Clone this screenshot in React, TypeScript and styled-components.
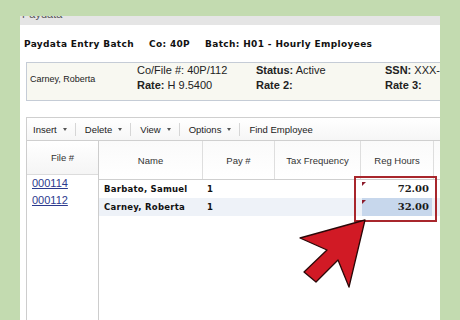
import React from 'react';
import styled, { createGlobalStyle } from 'styled-components';

const GlobalStyle = createGlobalStyle`
  html, body {
    margin: 0;
    padding: 0;
    background: #c3dbb0;
  }
  body {
    font-family: "Liberation Sans", Arial, sans-serif;
  }
`;

const Page = styled.div`
  width: 460px;
  height: 320px;
  box-sizing: border-box;
  padding: 16px 0 0 20px;
  overflow: hidden;
  background: #c3dbb0;
`;

const Panel = styled.div`
  position: relative;
  width: 420px;
  height: 304px;
  background: #fff;
  overflow: hidden;
  display: flex;
  flex-direction: column;
`;

const TitleBar = styled.div`
  height: 9px;
  flex: none;
  background: #e5e5e5;
  overflow: hidden;
  padding-left: 2px;
  span {
    display: block;
    margin-top: -7px;
    font-size: 11px;
    line-height: 11px;
    color: #555;
  }
`;

const BatchHeader = styled.div`
  flex: none;
  display: flex;
  gap: 15px;
  height: 26px;
  margin-top: 6px;
  padding-left: 4px;
  line-height: 26px;
  font-family: "DejaVu Sans", Verdana, sans-serif;
  font-weight: bold;
  font-size: 9px;
  letter-spacing: 0.35px;
  color: #111;
  white-space: nowrap;
`;

const InfoBox = styled.div`
  flex: none;
  display: flex;
  width: 440px;
  height: 39px;
  box-sizing: border-box;
  margin: 5px 0 0 6px;
  background: #f8f8f1;
  border: 1px solid #c5ccd6;
  white-space: nowrap;
`;

const InfoName = styled.div`
  width: 108px;
  padding: 0 0 5px 3px;
  align-self: center;
  font-size: 9px;
  color: #222;
`;

const InfoCol = styled.div<{ $w: number }>`
  width: ${p => p.$w}px;
  flex: none;
  font-size: 11px;
  line-height: 15px;
  color: #222;
  b {
    font-weight: bold;
  }
`;

const Toolbar = styled.div`
  flex: none;
  display: flex;
  align-items: center;
  width: 440px;
  height: 24px;
  box-sizing: border-box;
  margin: 16px 0 0 6px;
  border: 1px solid #cfcfcf;
  border-right: none;
  background: linear-gradient(#fff, #f6f6f6);
  font-size: 9.5px;
  color: #222;
`;

const ToolItem = styled.div`
  display: flex;
  align-items: center;
  padding: 0 8px 0 9px;
  white-space: nowrap;
  &:first-child {
    padding-left: 6px;
  }
`;

const Caret = styled.span`
  width: 0;
  height: 0;
  margin-left: 6px;
  border-left: 2.5px solid transparent;
  border-right: 2.5px solid transparent;
  border-top: 3px solid #555;
`;

const ToolSep = styled.span`
  width: 1px;
  height: 13px;
  background: #d6d6d6;
`;

const GridArea = styled.div`
  flex: 1;
  display: flex;
  margin-left: 6px;
`;

const FileCol = styled.div`
  width: 71px;
  flex: none;
  border-left: 1px solid #cdcdcd;
  border-right: 1px solid #cdcdcd;
`;

const FileHead = styled.div`
  height: 33px;
  border-bottom: 1px solid #dcdcdc;
  background: linear-gradient(#fff, #f5f5f5);
  display: flex;
  align-items: center;
  justify-content: center;
  font-size: 9.5px;
  color: #333;
`;

const FileLink = styled.a`
  display: block;
  padding-left: 5px;
  font-size: 11px;
  line-height: 17px;
  color: #2c3a8e;
  text-decoration: underline;
`;

const MainGrid = styled.div`
  flex: 1;
  display: flex;
  flex-direction: column;
`;

const HeadRow = styled.div`
  display: flex;
  height: 38px;
  border-bottom: 1px solid #cfcfcf;
  background: linear-gradient(#fafafa, #fff);
`;

const HeadCell = styled.div<{ $w?: number }>`
  width: ${p => (p.$w ? `${p.$w}px` : 'auto')};
  flex: ${p => (p.$w ? 'none' : '1')};
  box-sizing: border-box;
  display: flex;
  align-items: center;
  justify-content: center;
  font-size: 9.5px;
  color: #333;
  & + & {
    border-left: 1px solid #dedede;
  }
`;

const Row = styled.div<{ $alt?: boolean }>`
  display: flex;
  height: 18px;
  background: ${p => (p.$alt ? '#eef2f8' : '#fff')};
`;

const Cell = styled.div<{ $w: number }>`
  width: ${p => p.$w}px;
  flex: none;
  box-sizing: border-box;
  padding-left: 5px;
  line-height: 18px;
  font-family: "DejaVu Sans", Verdana, sans-serif;
  font-weight: bold;
  font-size: 8.5px;
  letter-spacing: 0.25px;
  color: #111;
  white-space: nowrap;
`;

const HoursCell = styled.div<{ $selected?: boolean }>`
  position: relative;
  width: 70px;
  flex: none;
  margin: 0 1px 0 2px;
  box-sizing: border-box;
  padding-right: 3px;
  text-align: right;
  line-height: 18px;
  font-family: "DejaVu Serif", Georgia, serif;
  font-weight: bold;
  font-size: 10px;
  color: #1a1a1a;
  background: ${p => (p.$selected ? '#c7d7ec' : 'transparent')};
  &::before {
    content: '';
    position: absolute;
    left: 0;
    top: 2px;
    border-top: 4px solid #8c1c2c;
    border-right: 4px solid transparent;
  }
`;

const Highlight = styled.div`
  position: absolute;
  left: 334px;
  top: 160px;
  width: 83px;
  height: 46px;
  box-sizing: border-box;
  border: 2px solid #a8262c;
`;

const Arrow = styled.svg`
  position: absolute;
  left: 276px;
  top: 200px;
`;

const App = () => {
  return (
    <Page>
      <GlobalStyle />
      <Panel>
        <TitleBar>
          <span>Paydata</span>
        </TitleBar>
        <BatchHeader>
          <span>Paydata Entry Batch</span>
          <span>Co: 40P</span>
          <span>Batch: H01 - Hourly Employees</span>
        </BatchHeader>
        <InfoBox>
          <InfoName>Carney, Roberta</InfoName>
          <InfoCol $w={119}>
            <div>Co/File #: 40P/112</div>
            <div><b>Rate:</b> H 9.5400</div>
          </InfoCol>
          <InfoCol $w={129}>
            <div><b>Status:</b> Active</div>
            <div><b>Rate 2:</b></div>
          </InfoCol>
          <InfoCol $w={80}>
            <div><b>SSN:</b> XXX-XX-</div>
            <div><b>Rate 3:</b></div>
          </InfoCol>
        </InfoBox>
        <Toolbar>
          <ToolItem>Insert<Caret /></ToolItem>
          <ToolSep />
          <ToolItem>Delete<Caret /></ToolItem>
          <ToolSep />
          <ToolItem>View<Caret /></ToolItem>
          <ToolSep />
          <ToolItem>Options<Caret /></ToolItem>
          <ToolSep />
          <ToolItem>Find Employee</ToolItem>
        </Toolbar>
        <GridArea>
          <FileCol>
            <FileHead>File #</FileHead>
            <FileLink>000114</FileLink>
            <FileLink>000112</FileLink>
          </FileCol>
          <MainGrid>
            <HeadRow>
              <HeadCell $w={103}>Name</HeadCell>
              <HeadCell $w={72}>Pay #</HeadCell>
              <HeadCell $w={86}>Tax Frequency</HeadCell>
              <HeadCell $w={73}>Reg Hours</HeadCell>
              <HeadCell />
            </HeadRow>
            <Row>
              <Cell $w={103}>Barbato, Samuel</Cell>
              <Cell $w={72}>1</Cell>
              <Cell $w={86}></Cell>
              <HoursCell>72.00</HoursCell>
            </Row>
            <Row $alt>
              <Cell $w={103}>Carney, Roberta</Cell>
              <Cell $w={72}>1</Cell>
              <Cell $w={86}></Cell>
              <HoursCell $selected>32.00</HoursCell>
            </Row>
          </MainGrid>
        </GridArea>
        <Highlight />
        <Arrow width="76" height="76" viewBox="0 0 76 76">
          <polygon
            points="69,4 53,71 42,44 20,66 8,56 31,34 4,22"
            fill="#d11a25"
            stroke="#2a0808"
            strokeWidth="1.3"
            strokeLinejoin="round"
          />
        </Arrow>
      </Panel>
    </Page>
  );
};

export default App;
